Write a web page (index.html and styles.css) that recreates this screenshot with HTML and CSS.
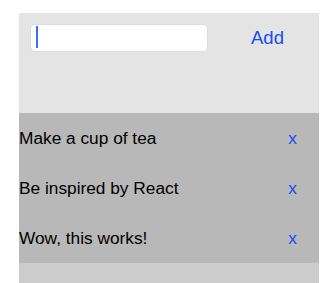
FILE: index.html
```html
<!DOCTYPE html>
<html lang="en">
<head>
    <meta charset="UTF-8">
    <meta name="viewport" content="width=device-width, initial-scale=1.0">
    <title>Todo</title>
    <link rel="stylesheet" href="styles.css">
</head>
<body>
    <div class="app">
        <div class="header">
            <div class="text-input">
                <span class="caret"></span>
            </div>
            <button class="add-btn">Add</button>
        </div>

        <div class="list">
            <div class="item">
                <span class="item-text">Make a cup of tea</span>
                <button class="remove-btn">x</button>
            </div>
            <div class="item">
                <span class="item-text">Be inspired by React</span>
                <button class="remove-btn">x</button>
            </div>
            <div class="item">
                <span class="item-text">Wow, this works!</span>
                <button class="remove-btn">x</button>
            </div>
        </div>
    </div>
</body>
</html>
```

FILE: styles.css
```css
html, body {
    margin: 0;
    padding: 0;
    background-color: #fff;
}
body {
    font-family: 'Liberation Sans', Helvetica, Arial, sans-serif;
    color: #000;
}
.app {
    width: 300px;
    height: 270px;
    margin: 13px 0 0 19px;
    display: flex;
    flex-direction: column;
    background-color: #cdcdcd;
}
.header {
    height: 100px;
    box-sizing: border-box;
    padding: 11px 0 0 11px;
    display: flex;
    align-items: flex-start;
    background-color: #e4e4e4;
}
.text-input {
    width: 178px;
    height: 28px;
    box-sizing: border-box;
    background-color: #fff;
    border: 1px solid #dcdcdc;
    border-radius: 5px;
    padding: 1px 0 0 5px;
}
.caret {
    display: block;
    width: 2px;
    height: 22px;
    background-color: #3e6ff0;
}
button {
    background: none;
    border: none;
    padding: 0;
    font-family: inherit;
    color: #1a4af5;
    cursor: pointer;
}
.add-btn {
    margin-left: 43px;
    font-size: 18.5px;
    line-height: 28px;
}
.list {
    background-color: #b8b8b8;
}
.item {
    height: 50px;
    display: flex;
    align-items: center;
    justify-content: space-between;
    padding-right: 22px;
    padding-top: 1px;
    box-sizing: border-box;
    font-size: 17.3px;
}
.remove-btn {
    font-size: 17.3px;
}
```
